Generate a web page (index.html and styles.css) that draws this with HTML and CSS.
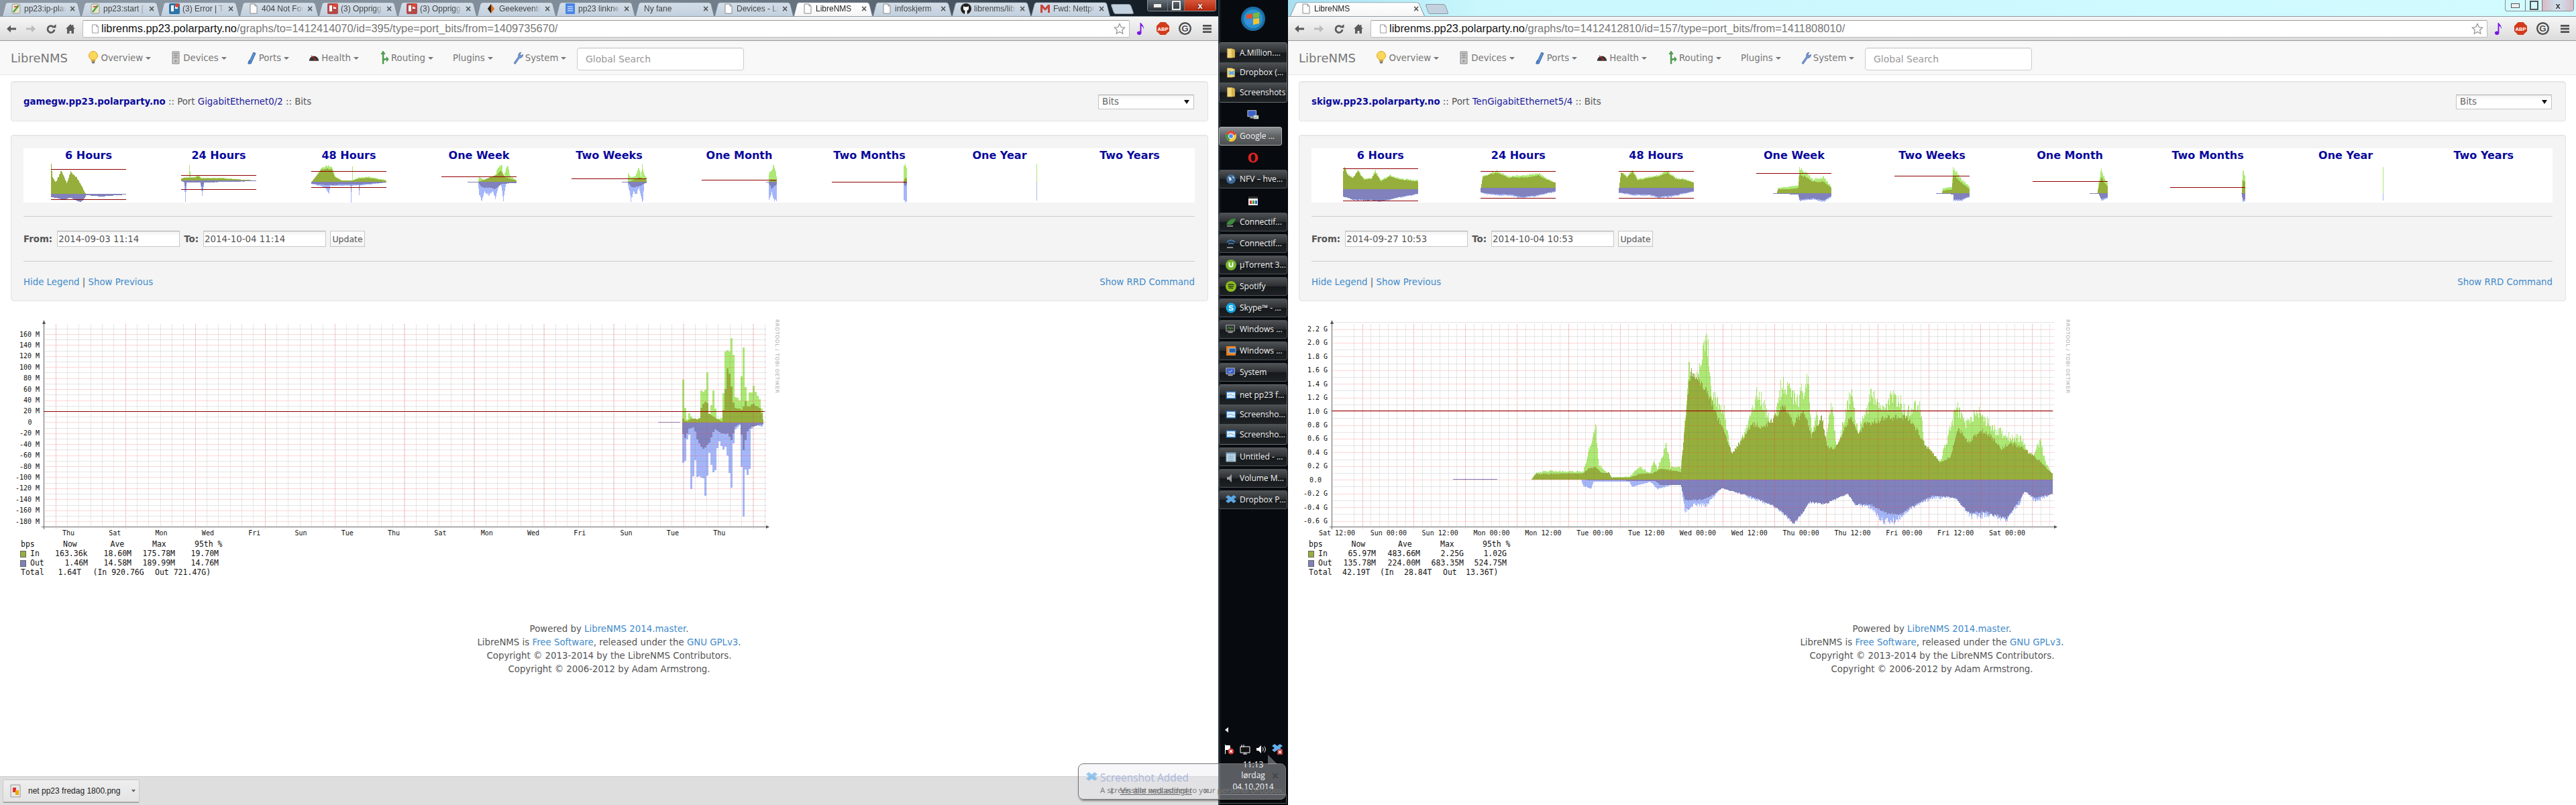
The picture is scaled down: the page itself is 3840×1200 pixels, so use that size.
FILE: index.html
```html
<!DOCTYPE html>
<html>
	<head>
		<meta charset="UTF-8">
		<title>LibreNMS</title>
		<link rel="stylesheet" href="styles.css">
	</head>
	<body>
		<svg class="defs">
			<symbol id="i-page" viewBox="0 0 16 16"><path d="M3 1h7l3 3v11H3z" fill="#fff" stroke="#8a8a8a"/><path d="M10 1v3h3" fill="none" stroke="#8a8a8a"/></symbol>
			<symbol id="i-back" viewBox="0 0 16 16"><path d="M15 6.5H7V2.5L1 8l6 5.500V9.500h8z" fill="#5a5a5a"/></symbol>
			<symbol id="i-fwd" viewBox="0 0 16 16"><path d="M1 6.500h8V2.500L15 8l-6 5.500V9.500H1z" fill="#bcbcbc"/></symbol>
			<symbol id="i-reload" viewBox="0 0 16 16"><path d="M13 9a5 5 0 1 1-1.700-4.200" fill="none" stroke="#5a5a5a" stroke-width="2.800"/><path d="M9 6.500h6.500V1z" fill="#5a5a5a"/></symbol>
			<symbol id="i-home" viewBox="0 0 16 16"><path d="M8 1L1 8h2v7h3.500v-4h3v4H13V8h2l-2.500-2.500V2h-2v1.500z" fill="#5a5a5a"/></symbol>
			<symbol id="i-star" viewBox="0 0 18 18"><path d="M9 1.500l2.300 5 5.400.6-4 3.700 1.100 5.400L9 13.500l-4.800 2.700 1.100-5.400-4-3.700 5.400-.6z" fill="#fff" stroke="#8f8f8f" stroke-width="1.200"/></symbol>
			<symbol id="i-note" viewBox="0 0 16 20"><path d="M7 1v13.500A3.500 3 0 1 0 9 17V6c2 .5 3.500 2.500 3 5 2-3-.5-6-4-10z" fill="#7a16e6"/></symbol>
			<symbol id="i-menu" viewBox="0 0 14 14"><path d="M0 1h14v3H0zM0 6h14v3H0zM0 11h14v3H0z" fill="#505050"/></symbol>
			<symbol id="i-bulb" viewBox="0 0 16 20"><circle cx="8" cy="7" r="6.500" fill="#fbd75b" stroke="#d9a520"/><path d="M5 13h6v3H5z" fill="#c9a24b"/><path d="M6 16h4v2.500H6z" fill="#777"/></symbol>
			<symbol id="i-server" viewBox="0 0 16 20"><path d="M3 1h10v18H3z" fill="#c8c8c8" stroke="#8a8a8a"/><path d="M5 4h6M5 7h6M5 10h6" stroke="#777"/><circle cx="8" cy="15" r="1.500" fill="#888"/></symbol>
			<symbol id="i-cable" viewBox="0 0 16 20"><path d="M3 19L11 2l3 1.500L7 19z" fill="#5c8fd6" stroke="#3968a8"/><path d="M2 19.500l2-6 3 1.500z" fill="#3a6db0"/></symbol>
			<symbol id="i-gauge" viewBox="0 0 20 20"><path d="M1 16a9 9 0 1 1 18 0z" fill="#333"/><path d="M5 6l9 9" stroke="#d22" stroke-width="1.500"/></symbol>
			<symbol id="i-route" viewBox="0 0 16 22"><path d="M6 21V5H3.500L7 0l3.500 5H8v8l5-1v-2.500l3 4-3 4V14l-5 1v6z" fill="#4da34a" stroke="#2f7a2e" stroke-width=".6"/></symbol>
			<symbol id="i-wrench" viewBox="0 0 16 20"><path d="M2 18l7-10c-1-3 1-6 4-6l-2 3 2 2 2.500-2c.5 3-2 6-5 5.500L4 19.500z" fill="#6e96cf" stroke="#47689c" stroke-width=".7"/></symbol>
			<symbol id="i-wiki" viewBox="0 0 16 16"><rect x="2" y="1" width="12" height="14" rx="2" fill="#e9e4c9" stroke="#999"/><path d="M4 13L12 3" stroke="#4aa13f" stroke-width="2.500"/><path d="M5 5h5" stroke="#c0392b" stroke-width="1.500"/></symbol>
			<symbol id="i-trello" viewBox="0 0 16 16"><rect width="16" height="16" rx="2" fill="#2c74a8"/><path d="M3 3h4v9H3zM9 3h4v5H9z" fill="#fff"/><circle cx="12" cy="3" r="3" fill="#e3462e"/></symbol>
			<symbol id="i-trello-red" viewBox="0 0 16 16"><rect width="16" height="16" rx="2" fill="#b34a4a"/><path d="M3 3h4v9H3zM9 3h4v5H9z" fill="#fff"/><circle cx="12" cy="3" r="3" fill="#e3462e"/></symbol>
			<symbol id="i-geek" viewBox="0 0 16 16"><path d="M8 1l5 7-5 7-5-7z" fill="#e0701a"/><path d="M8 1v14l-5-7z" fill="#222"/></symbol>
			<symbol id="i-doc" viewBox="0 0 16 16"><rect x="1" width="14" height="16" rx="1" fill="#4a86e8"/><path d="M4 5h8M4 8h8M4 11h8" stroke="#fff" stroke-width="1.200"/></symbol>
			<symbol id="i-github" viewBox="0 0 16 16"><circle cx="8" cy="8" r="8" fill="#222"/><path d="M4 4l2 1.200h4L12 4v4c0 2-1.500 3-4 3s-4-1-4-3zM6.500 11h3v5h-3z" fill="#fff"/></symbol>
			<symbol id="i-gmail" viewBox="0 0 16 16"><path d="M1 2h3l4 5 4-5h3v12h-3V7L8 11 4 7v7H1z" fill="#c9453a"/></symbol>
			<symbol id="i-folder" viewBox="0 0 16 20"><path d="M1 2h8l6 2v14l-6 1H1z" fill="#f2d77c" stroke="#b89a3c" stroke-width=".6"/><path d="M9 2v17l6-1V4z" fill="#d9b24c"/></symbol>
			<symbol id="i-box" viewBox="0 0 16 16"><path d="M4 1l4 3 4-3 4 3-4 3 4 3-4 3-4-3-4 3-4-3 4-3-4-3z" fill="#5aa8e8"/></symbol>
			<symbol id="i-dropfolder" viewBox="0 0 16 20"><path d="M1 2h8l6 2v14l-6 1H1z" fill="#f2d77c" stroke="#b89a3c" stroke-width=".6"/><path d="M6 7l3 2 3-2 3 2-3 2 3 2-3 2-3-2-3 2-3-2 3-2-3-2z" fill="#5aa8e8"/></symbol>
			<symbol id="i-monitor" viewBox="0 0 20 16"><rect x="1" y="1" width="14" height="10" fill="#3c60c8" stroke="#ccc"/><path d="M5 12h6v2H5z" fill="#bbb"/><rect x="11" y="9" width="8" height="6" fill="#ddd"/><path d="M12 12l2 1 3-2" stroke="#2a8a2a" fill="none"/></symbol>
			<symbol id="i-chrome" viewBox="0 0 16 16"><circle cx="8" cy="8" r="8" fill="#dd4b39"/><path d="M8 8L1 4.500A8 8 0 0 0 5 15.500z" fill="#3ba14a"/><path d="M8 8L5 15.500A8 8 0 0 0 16 8V5z" fill="#f7c936"/><circle cx="8" cy="8" r="3.600" fill="#4b8bf0" stroke="#fff"/></symbol>
			<symbol id="i-opera" viewBox="0 0 16 16"><ellipse cx="8" cy="8" rx="7.500" ry="7.500" fill="#e02020"/><ellipse cx="8" cy="8" rx="3.200" ry="5.500" fill="#111"/></symbol>
			<symbol id="i-globe" viewBox="0 0 16 16"><circle cx="8" cy="8" r="7" fill="#3f6c99"/><path d="M4 4l4 2 1 3-3 2zM10 3l3 3-2 1z" fill="#cfe2f3"/></symbol>
			<symbol id="i-clap" viewBox="0 0 16 16"><rect x="1" y="5" width="14" height="10" fill="#eee"/><path d="M1 2h14v3H1z" fill="#333"/><path d="M3 8h3v5H3z" fill="#d33"/><path d="M7 8h3v5H7z" fill="#3a3"/><path d="M11 8h3v5h-3z" fill="#36c"/></symbol>
			<symbol id="i-leaf" viewBox="0 0 16 16"><path d="M1 12c3-8 8-9 14-9-2 6-5 10-11 9z" fill="#3c8a3c"/><path d="M2 15h9v-2H2z" fill="#888"/></symbol>
			<symbol id="i-wifi" viewBox="0 0 16 16"><path d="M2 6c4-4 8-4 12 0M4 9c3-2 5-2 8 0" fill="none" stroke="#3f87c8" stroke-width="1.500"/><path d="M2 15h9v-2H2z" fill="#888"/></symbol>
			<symbol id="i-utorrent" viewBox="0 0 16 16"><circle cx="8" cy="8" r="8" fill="#77b52f"/><path d="M4.500 4v4a3.500 3.500 0 0 0 7 0V4H9.500v4a1.500 1.500 0 0 1-3 0V4z" fill="#fff"/></symbol>
			<symbol id="i-spotify" viewBox="0 0 16 16"><circle cx="8" cy="8" r="8" fill="#8bbb1f"/><path d="M3.500 5.500c3-1 6-1 9 .5M4 8c3-.8 5-.8 8 .5M4.500 10.500c2-.6 4-.6 6.500.4" fill="none" stroke="#222" stroke-width="1.300"/></symbol>
			<symbol id="i-perf" viewBox="0 0 18 16"><rect x="1" y="1" width="14" height="10" fill="#333" stroke="#bbb"/><path d="M3 7l3-3 2 4 2-3 3 2" stroke="#3c3" fill="none"/><path d="M4 12h8v2H4z" fill="#aaa"/></symbol>
			<symbol id="i-vbox" viewBox="0 0 16 16"><rect x="1" y="1" width="14" height="14" fill="#e0801f"/><rect x="5" y="4" width="10" height="7" fill="#1f5fb0" stroke="#fff" stroke-width=".6"/></symbol>
			<symbol id="i-system" viewBox="0 0 18 16"><rect x="1" y="1" width="14" height="10" fill="#3c60c8" stroke="#bbb"/><path d="M5 6l2 2 4-4" stroke="#fff" fill="none"/><path d="M4 12h8v2H4z" fill="#aaa"/></symbol>
			<symbol id="i-photo" viewBox="0 0 18 16"><rect x="1.500" y="2.500" width="15" height="11" fill="#dcecf7" stroke="#2a78c4" stroke-width="1.500"/><path d="M3 9l5-2 7 3" stroke="#6fa3d0" fill="none"/></symbol>
			<symbol id="i-notepad" viewBox="0 0 16 16"><rect x="1" y="2" width="14" height="13" fill="#bcd6ea" stroke="#8aa"/><path d="M1 2h14v2H1z" fill="#7fa7c9"/><path d="M4 7h8M4 10h8M4 13h8" stroke="#7b9ab5"/></symbol>
			<symbol id="i-volume" viewBox="0 0 16 16"><path d="M2 6h3l4-4v12l-4-4H2z" fill="#9a9a9a"/></symbol>
			<symbol id="i-flag" viewBox="0 0 16 16"><path d="M2 1v14h1V9h6l1 1V3L9 2H3V1z" fill="#fff"/><circle cx="11" cy="11" r="4.500" fill="#d0312d"/><path d="M9 9l4 4m0-4l-4 4" stroke="#fff" stroke-width="1.300"/></symbol>
			<symbol id="i-net" viewBox="0 0 16 16"><path d="M1 4h14v9H1z" fill="#111" stroke="#fff"/><path d="M5 15h6M8 13v2M3 1v4M6 1v4" stroke="#fff"/></symbol>
			<symbol id="i-speaker" viewBox="0 0 16 16"><path d="M1 6h3l4-4v12l-4-4H1z" fill="#fff"/><path d="M10 5c1.500 2 1.500 4 0 6M12.500 3.500c2.500 3 2.500 6 0 9" stroke="#fff" fill="none"/></symbol>
			<symbol id="i-dropx" viewBox="0 0 16 16"><path d="M4 0l4 3 4-3 4 3-4 3 4 3-4 3-4-3-4 3-4-3 4-3-4-3z" fill="#63b0ea"/><rect x="8" y="8" width="8" height="8" rx="1" fill="#c9302c"/><path d="M10 10l4 4m0-4l-4 4" stroke="#fff" stroke-width="1.300"/></symbol>
			<symbol id="i-png" viewBox="0 0 16 20"><path d="M1 1h14v18H1z" fill="#e8e8e8" stroke="#999"/><path d="M4 5h5v7H4z" fill="#d33"/><path d="M8 9h5v7H8z" fill="#ea0"/></symbol>
		</svg>

		<section class="window window-active">
			<div class="tabs">
				<a class="tab"><svg class="fav"><use href="#i-wiki"/></svg><span class="tab-title">pp23:ip-plan</span><span class="tab-x">×</span></a>
				<a class="tab"><svg class="fav"><use href="#i-wiki"/></svg><span class="tab-title">pp23:start [T</span><span class="tab-x">×</span></a>
				<a class="tab"><svg class="fav"><use href="#i-trello"/></svg><span class="tab-title">(3) Error | Tr</span><span class="tab-x">×</span></a>
				<a class="tab"><svg class="fav"><use href="#i-page"/></svg><span class="tab-title">404 Not Foun</span><span class="tab-x">×</span></a>
				<a class="tab"><svg class="fav"><use href="#i-trello-red"/></svg><span class="tab-title">(3) Opprigg</span><span class="tab-x">×</span></a>
				<a class="tab"><svg class="fav"><use href="#i-trello-red"/></svg><span class="tab-title">(3) Opprigg</span><span class="tab-x">×</span></a>
				<a class="tab"><svg class="fav"><use href="#i-geek"/></svg><span class="tab-title">Geekevents</span><span class="tab-x">×</span></a>
				<a class="tab"><svg class="fav"><use href="#i-doc"/></svg><span class="tab-title">pp23 linknet</span><span class="tab-x">×</span></a>
				<a class="tab tab-nofav"><span class="tab-title">Ny fane</span><span class="tab-x">×</span></a>
				<a class="tab"><svg class="fav"><use href="#i-page"/></svg><span class="tab-title">Devices - Lib</span><span class="tab-x">×</span></a>
				<a class="tab tab-on"><svg class="fav"><use href="#i-page"/></svg><span class="tab-title">LibreNMS</span><span class="tab-x">×</span></a>
				<a class="tab"><svg class="fav"><use href="#i-page"/></svg><span class="tab-title">infoskjerm</span><span class="tab-x">×</span></a>
				<a class="tab"><svg class="fav"><use href="#i-github"/></svg><span class="tab-title">librenms/lib</span><span class="tab-x">×</span></a>
				<a class="tab"><svg class="fav"><use href="#i-gmail"/></svg><span class="tab-title">Fwd: Nettpr</span><span class="tab-x">×</span></a>
				<span class="tab-new"></span>
				<div class="winbtns"><span class="wb wb-min"></span><span class="wb wb-max"></span><span class="wb wb-close">x</span></div>
			</div>
			<div class="toolbar">
				<span class="tool"><svg><use href="#i-back"/></svg></span>
				<span class="tool"><svg><use href="#i-fwd"/></svg></span>
				<span class="tool"><svg><use href="#i-reload"/></svg></span>
				<span class="tool"><svg><use href="#i-home"/></svg></span>
				<div class="omnibox"><svg class="omni-page"><use href="#i-page"/></svg><span class="url"><b>librenms.pp23.polarparty.no</b>/graphs/to=1412414070/id=395/type=port_bits/from=1409735670/</span><svg class="omni-star"><use href="#i-star"/></svg></div>
				<span class="ext"><svg class="ext-note"><use href="#i-note"/></svg></span>
				<span class="ext"><svg viewBox="0 0 20 20"><path d="M6 0h8l6 6v8l-6 6H6l-6-6V6z" fill="#d13b1c"/><text x="10" y="13.500" text-anchor="middle" class="abp-text">ABP</text></svg></span>
				<span class="ext"><svg viewBox="0 0 20 20"><circle cx="10" cy="10" r="10" fill="#4d4d4d"/><circle cx="10" cy="10" r="7.500" fill="#f2f2f2"/><text x="10" y="15" text-anchor="middle" class="g-text">G</text></svg></span>
				<span class="ext"><svg class="ext-menu"><use href="#i-menu"/></svg></span>
			</div>
			<nav class="navbar">
				<a class="brand">LibreNMS</a>
				<a class="nav-item"><svg><use href="#i-bulb"/></svg>Overview<i class="caret"></i></a>
				<a class="nav-item"><svg><use href="#i-server"/></svg>Devices<i class="caret"></i></a>
				<a class="nav-item"><svg><use href="#i-cable"/></svg>Ports<i class="caret"></i></a>
				<a class="nav-item"><svg><use href="#i-gauge"/></svg>Health<i class="caret"></i></a>
				<a class="nav-item"><svg><use href="#i-route"/></svg>Routing<i class="caret"></i></a>
				<a class="nav-item">Plugins<i class="caret"></i></a>
				<a class="nav-item"><svg><use href="#i-wrench"/></svg>System<i class="caret"></i></a>
				<input class="search" placeholder="Global Search">
			</nav>
			<div class="well well-title">
				<div class="crumb"><a class="host">gamegw.pp23.polarparty.no</a> :: Port <a class="port">GigabitEthernet0/2</a> :: Bits</div>
				<div class="select">Bits<i></i></div>
			</div>
			<div class="well well-graphs">
				<div class="thumbs" data-set="left">
					<a class="thumb">6 Hours<svg></svg></a>
					<a class="thumb">24 Hours<svg></svg></a>
					<a class="thumb">48 Hours<svg></svg></a>
					<a class="thumb">One Week<svg></svg></a>
					<a class="thumb">Two Weeks<svg></svg></a>
					<a class="thumb">One Month<svg></svg></a>
					<a class="thumb">Two Months<svg></svg></a>
					<a class="thumb">One Year<svg></svg></a>
					<a class="thumb">Two Years<svg></svg></a>
				</div>
				<hr>
				<form class="range"><b>From:</b><input class="date" value="2014-09-03 11:14"><b>To:</b><input class="date" value="2014-10-04 11:14"><button type="button">Update</button></form>
				<hr>
				<div class="links"><span><a>Hide Legend</a> | <a>Show Previous</a></span><a>Show RRD Command</a></div>
			</div>
			<svg class="rrd" id="rrd-left" viewBox="0 460 1200 410"></svg>
			<footer class="foot">
				<p>Powered by <a>LibreNMS 2014.master</a>.</p>
				<p>LibreNMS is <a>Free Software</a>, released under the <a>GNU GPLv3</a>.</p>
				<p>Copyright © 2013-2014 by the LibreNMS Contributors.</p>
				<p>Copyright © 2006-2012 by Adam Armstrong.</p>
			</footer>
			<div class="downloads">
				<div class="dl-item"><svg><use href="#i-png"/></svg><span>net pp23 fredag 1800.png</span><i></i></div>
				<span class="dl-arrow">⬇</span>
				<a class="dl-all">Vis alle nedlastinger</a>
				<span class="dl-x">×</span>
			</div>
		</section>

		<aside class="taskbar">
			<div class="orb"><svg viewBox="0 0 36 36"><circle cx="18" cy="18" r="18" fill="#1c6fa8"/><circle cx="18" cy="18" r="14" fill="#2a93cf"/><path d="M8 12l9-2v7l-9 1z" fill="#e8502a"/><path d="M18 10l9-2v8l-9 1z" fill="#7ab93c"/><path d="M8 19l9-1v7l-9 2z" fill="#3b8fe0"/><path d="M18 18l9-1v8l-9 2z" fill="#f4c22e"/></svg></div>
			<div class="task-group">
				<a class="task"><svg><use href="#i-folder"/></svg>A.Million....</a>
				<a class="task"><svg><use href="#i-dropfolder"/></svg>Dropbox (...</a>
				<a class="task"><svg><use href="#i-folder"/></svg>Screenshots</a>
			</div>
			<div class="task-slot"><svg><use href="#i-monitor"/></svg></div>
			<a class="task task-on"><svg><use href="#i-chrome"/></svg>Google ...</a>
			<div class="task-slot"><svg><use href="#i-opera"/></svg></div>
			<a class="task"><svg><use href="#i-globe"/></svg>NFV – hve...</a>
			<div class="task-slot"><svg><use href="#i-clap"/></svg></div>
			<a class="task"><svg><use href="#i-leaf"/></svg>Connectif...</a>
			<a class="task"><svg><use href="#i-wifi"/></svg>Connectif...</a>
			<a class="task"><svg><use href="#i-utorrent"/></svg>µTorrent 3...</a>
			<a class="task"><svg><use href="#i-spotify"/></svg>Spotify</a>
			<a class="task"><svg viewBox="0 0 16 16"><circle cx="8" cy="8" r="7.500" fill="#12a5e8"/><text x="8" y="12" text-anchor="middle" class="skype-text">S</text></svg>Skype™ - ...</a>
			<a class="task"><svg><use href="#i-perf"/></svg>Windows ...</a>
			<a class="task"><svg><use href="#i-vbox"/></svg>Windows ...</a>
			<a class="task"><svg><use href="#i-system"/></svg>System</a>
			<div class="task-group">
				<a class="task"><svg><use href="#i-photo"/></svg>net pp23 f...</a>
				<a class="task"><svg><use href="#i-photo"/></svg>Screensho...</a>
				<a class="task"><svg><use href="#i-photo"/></svg>Screensho...</a>
			</div>
			<a class="task"><svg><use href="#i-notepad"/></svg>Untitled - ...</a>
			<a class="task"><svg><use href="#i-volume"/></svg>Volume M...</a>
			<a class="task"><svg><use href="#i-box"/></svg>Dropbox P...</a>
			<div class="tray">
				<i class="tray-arrow"></i>
				<div class="tray-icons"><svg><use href="#i-flag"/></svg><svg><use href="#i-net"/></svg><svg><use href="#i-speaker"/></svg><svg><use href="#i-dropx"/></svg></div>
				<div class="clock"><span>11:13</span><span>lørdag</span><span>04.10.2014</span></div>
				<div class="show-desktop"></div>
			</div>
		</aside>

		<section class="window">
			<div class="tabs tabs-idle">
				<a class="tab tab-on tab-wide"><svg class="fav"><use href="#i-page"/></svg><span class="tab-title">LibreNMS</span><span class="tab-x">×</span></a>
				<span class="tab-new"></span>
				<div class="winbtns"><span class="wb wb-min"></span><span class="wb wb-max"></span><span class="wb wb-close">x</span></div>
			</div>
			<div class="toolbar">
				<span class="tool"><svg><use href="#i-back"/></svg></span>
				<span class="tool"><svg><use href="#i-fwd"/></svg></span>
				<span class="tool"><svg><use href="#i-reload"/></svg></span>
				<span class="tool"><svg><use href="#i-home"/></svg></span>
				<div class="omnibox"><svg class="omni-page"><use href="#i-page"/></svg><span class="url"><b>librenms.pp23.polarparty.no</b>/graphs/to=1412412810/id=157/type=port_bits/from=1411808010/</span><svg class="omni-star"><use href="#i-star"/></svg></div>
				<span class="ext"><svg class="ext-note"><use href="#i-note"/></svg></span>
				<span class="ext"><svg viewBox="0 0 20 20"><path d="M6 0h8l6 6v8l-6 6H6l-6-6V6z" fill="#d13b1c"/><text x="10" y="13.500" text-anchor="middle" class="abp-text">ABP</text></svg></span>
				<span class="ext"><svg viewBox="0 0 20 20"><circle cx="10" cy="10" r="10" fill="#4d4d4d"/><circle cx="10" cy="10" r="7.500" fill="#f2f2f2"/><text x="10" y="15" text-anchor="middle" class="g-text">G</text></svg></span>
				<span class="ext"><svg class="ext-menu"><use href="#i-menu"/></svg></span>
			</div>
			<nav class="navbar">
				<a class="brand">LibreNMS</a>
				<a class="nav-item"><svg><use href="#i-bulb"/></svg>Overview<i class="caret"></i></a>
				<a class="nav-item"><svg><use href="#i-server"/></svg>Devices<i class="caret"></i></a>
				<a class="nav-item"><svg><use href="#i-cable"/></svg>Ports<i class="caret"></i></a>
				<a class="nav-item"><svg><use href="#i-gauge"/></svg>Health<i class="caret"></i></a>
				<a class="nav-item"><svg><use href="#i-route"/></svg>Routing<i class="caret"></i></a>
				<a class="nav-item">Plugins<i class="caret"></i></a>
				<a class="nav-item"><svg><use href="#i-wrench"/></svg>System<i class="caret"></i></a>
				<input class="search" placeholder="Global Search">
			</nav>
			<div class="well well-title">
				<div class="crumb"><a class="host">skigw.pp23.polarparty.no</a> :: Port <a class="port">TenGigabitEthernet5/4</a> :: Bits</div>
				<div class="select">Bits<i></i></div>
			</div>
			<div class="well well-graphs">
				<div class="thumbs" data-set="right">
					<a class="thumb">6 Hours<svg></svg></a>
					<a class="thumb">24 Hours<svg></svg></a>
					<a class="thumb">48 Hours<svg></svg></a>
					<a class="thumb">One Week<svg></svg></a>
					<a class="thumb">Two Weeks<svg></svg></a>
					<a class="thumb">One Month<svg></svg></a>
					<a class="thumb">Two Months<svg></svg></a>
					<a class="thumb">One Year<svg></svg></a>
					<a class="thumb">Two Years<svg></svg></a>
				</div>
				<hr>
				<form class="range"><b>From:</b><input class="date" value="2014-09-27 10:53"><b>To:</b><input class="date" value="2014-10-04 10:53"><button type="button">Update</button></form>
				<hr>
				<div class="links"><span><a>Hide Legend</a> | <a>Show Previous</a></span><a>Show RRD Command</a></div>
			</div>
			<svg class="rrd" id="rrd-right" viewBox="0 460 1200 410"></svg>
			<footer class="foot">
				<p>Powered by <a>LibreNMS 2014.master</a>.</p>
				<p>LibreNMS is <a>Free Software</a>, released under the <a>GNU GPLv3</a>.</p>
				<p>Copyright © 2013-2014 by the LibreNMS Contributors.</p>
				<p>Copyright © 2006-2012 by Adam Armstrong.</p>
			</footer>
		</section>

		<div class="toast">
			<svg class="toast-icon"><use href="#i-box"/></svg>
			<div class="toast-title">Screenshot Added</div>
			<div class="toast-text">A screenshot was added to your personal Dropbox.</div>
			<span class="toast-x">×</span>
		</div>
		<script src="graphs.js"></script>
	</body>
</html>
```
FILE: styles.css
```css
*{margin: 0;padding: 0;box-sizing: border-box;}
html,body{width: 3840px;height: 1200px;overflow: hidden;}
body{display: flex;position: relative;background: #fff;font: 13.33px "DejaVu Sans",Verdana,sans-serif;color: #555;}
a{color: #428bca;text-decoration: none;}
.defs{position: absolute;width: 0;height: 0;}
.abp-text{font: bold 8px "Liberation Sans",sans-serif;fill: #fff;}
.g-text{font: bold 14px "Liberation Sans",sans-serif;fill: #4d4d4d;}
.skype-text{font: bold 11px "Liberation Sans",sans-serif;fill: #fff;}

/* browser windows */
.window{flex: 1;min-width: 0;height: 1200px;display: flex;flex-direction: column;}
.window-active{flex: 0 0 1816px;}
.tabs{height: 24px;flex: none;display: flex;padding-left: 3px;isolation: isolate;background: linear-gradient(90deg,#8d99a4 0,#7f8b97 50%,#56626e 75%,#1a2530 90%,#0b1118 100%);font: 12px "Liberation Sans",Arial,sans-serif;color: #333;}
.tabs-idle{background: linear-gradient(90deg,#a9dff0 0,#c9f7fd 15%,#d2fbff 100%);}
.tab{position: relative;width: 118px;height: 24px;display: flex;align-items: center;padding: 2px 7px 0 13px;color: #444;}
.tab::before{content: "";position: absolute;z-index: -1;left: 0;right: 0;top: 1px;bottom: 0;background: linear-gradient(#d4deE8,#c2d0de);border: 1px solid #7e8c9a;border-bottom: 0;border-radius: 4px 4px 0 0;transform: perspective(40px) rotateX(10deg);transform-origin: bottom;}
.tab-on{z-index: 2;color: #222;}
.tab-on::before{background: linear-gradient(#fff,#f6f6f6);}
.tab-wide{width: 201px;padding-left: 16px;}
.tab-nofav{padding-left: 13px;}
.fav{width: 16px;height: 16px;flex: none;margin-right: 4px;}
.tab-title{flex: 1;min-width: 0;overflow: hidden;white-space: nowrap;-webkit-mask-image: linear-gradient(90deg,#000 82%,transparent);}
.tab-x{flex: none;width: 12px;margin-left: 4px;font: bold 14px "Liberation Sans",sans-serif;color: #555;text-align: center;}
.tab-new{width: 30px;height: 15px;margin: 6px 0 0 3px;background: #c4d2df;border: 1px solid #8c9aa8;border-radius: 3px;transform: skewX(20deg);}
.winbtns{margin-left: auto;margin-right: 3px;width: 103px;height: 17px;display: flex;border: 1px solid #8a8f94;border-top: 0;border-radius: 0 0 4px 4px;overflow: hidden;font: bold 13px "Liberation Sans",sans-serif;color: #fff;text-shadow: 0 0 2px #000;}
.wb{display: flex;align-items: center;justify-content: center;background: linear-gradient(#66707a,#2b3239);border-right: 1px solid #777;}
.wb-min{width: 30px;}
.wb-min::after{content: "";width: 11px;height: 5px;background: #eee;border: 1px solid #555;}
.wb-max{width: 25px;}
.wb-max::after{content: "";width: 9px;height: 10px;border: 2px solid #eee;outline: 1px solid #555;}
.wb-close{flex: 1;border: 0;background: linear-gradient(#d8573a,#b4260c);}
.tabs-idle .wb{background: transparent;color: #333;text-shadow: 0 0 3px #fff;}
.tabs-idle .wb-max::after{border-color: #555;outline: 0;}
.tabs-idle .wb-close{background: linear-gradient(90deg,#d9b9c4,#cfdbe8 40%,#cfdbe8 60%,#d9b9c4);}
.toolbar{height: 37px;flex: none;display: flex;align-items: center;padding: 0 0 0 2px;background: linear-gradient(#f6f6f6,#dcdcdc);border-top: 1px solid #8f9aa3;border-bottom: 1px solid #9a9a9a;}
.tool{width: 29.5px;height: 16px;display: flex;justify-content: center;}
.tool svg{width: 16px;height: 16px;}
.omnibox{flex: 1;min-width: 0;height: 26px;margin-left: 3px;display: flex;align-items: center;padding: 0 5px 0 11px;background: #fff;border: 1px solid #bdbdbd;border-top-color: #9d9d9d;border-radius: 2px;}
.omni-page{width: 14px;height: 16px;flex: none;}
.url{flex: 1;margin-left: 2px;font: 16.4px "Liberation Sans",Arial,sans-serif;color: #777;white-space: nowrap;}
.url b{font-weight: normal;color: #111;}
.omni-star{width: 18px;height: 18px;flex: none;}
.ext{width: 33px;display: flex;justify-content: center;}
.ext svg{width: 19px;height: 19px;}
.ext .ext-note{width: 15px;height: 19px;}
.ext .ext-menu{width: 13px;height: 13px;}
.navbar{height: 51px;flex: none;display: flex;align-items: center;padding-left: 16px;background: #f8f8f8;border-bottom: 1px solid #e7e7e7;color: #777;}
.brand{font-size: 18px;color: #777;margin-right: 16px;}
.nav-item{display: flex;align-items: center;padding: 0 14.5px;color: #777;font-size: 13.33px;}
.nav-item svg{width: 16px;height: 20px;margin-right: 3px;}
.caret{width: 0;height: 0;margin: 1px 0 0 4px;border: 4px solid transparent;border-top-color: #777;border-bottom: 0;}
.search{width: 249px;height: 34px;margin: 4px 0 0 1px;padding: 0 12px;background: #fff;border: 1px solid #ccc;border-radius: 4px;font: 14px "DejaVu Sans",Verdana,sans-serif;box-shadow: inset 0 1px 1px rgba(0,0,0,.075);}
.search::placeholder{color: #999;}

/* wells */
.well{flex: none;margin: 0 15px 0 16px;background: #f4f4f4;border: 1px solid #e3e3e3;border-radius: 4px;padding: 0 19px 0 18px;box-shadow: inset 0 1px 1px rgba(0,0,0,.05);}
.well-title{height: 60px;margin-top: 9px;display: flex;align-items: center;justify-content: space-between;}
.crumb{color: #555;margin-top: 0;}
.host{font-weight: bold;color: #0a0a9c;}
.port{color: #1a1a9c;}
.select{position: relative;width: 143px;height: 22px;margin: 1px 1px 0 0;padding-left: 5px;line-height: 20px;background: linear-gradient(#f2f2f2,#fff 35%);border: 1px solid #c4c4c4;border-top-color: #aaa;color: #666;}
.select i{position: absolute;right: 6px;top: 7px;border: 4px solid transparent;border-top: 6px solid #111;border-bottom: 0;}
.well-graphs{height: 248px;margin-top: 20px;padding-top: 19px;}
.thumbs{display: grid;grid-template-columns: repeat(9,1fr);height: 81px;background: #fff;}
.thumb{display: flex;flex-direction: column;align-items: center;padding-top: 1px;font-size: 16px;line-height: 20px;font-weight: bold;color: #0a0a9c;}
.thumb svg{width: 112px;height: 60px;flex: none;overflow: hidden;}
hr{height: 0;border: 0;border-top: 1px solid #ccc;margin-top: 20px;}
.range{height: 24px;margin-top: 21px;display: flex;align-items: center;color: #555;}
.date{width: 183px;height: 24px;margin: 0 6px 0 7px;padding-left: 1px;background: linear-gradient(#f0f0f0,#fff 30%);border: 1px solid #c8c8c8;border-top-color: #aaa;font: 13.33px "DejaVu Sans",Verdana,sans-serif;color: #555;}
button{width: 52px;height: 24px;background: linear-gradient(#fff,#f4f4f4);border: 1px solid #c4c4c4;font: 12.5px "DejaVu Sans",Verdana,sans-serif;color: #555;}
.range + hr{margin-top: 21px;}
.links{display: flex;justify-content: space-between;margin-top: 21px;line-height: 20px;color: #555;}

/* rrd graphs */
.rrd{width: 1200px;height: 410px;flex: none;margin-top: 11px;}
.rrd text{font: 10px "DejaVu Sans Mono",monospace;fill: #111;}
.rrd .legend{font-size: 11.5px;}
.rrd .mark{font: 7.5px "DejaVu Sans",sans-serif;fill: #aaa;}
.foot{flex: none;margin-top: 58px;text-align: center;line-height: 20px;color: #555;}
.downloads{margin-top: auto;flex: none;height: 43px;display: flex;align-items: center;padding: 0 0 0 4px;background: #dedede;border-top: 1px solid #cfcfcf;font: 12px "Liberation Sans",Arial,sans-serif;color: #222;}
.dl-item{width: 204px;height: 35px;display: flex;align-items: center;padding-left: 10px;background: linear-gradient(#eee,#e4e4e4);border: 1px solid #c8c8c8;border-bottom: 2px solid #a8a8a8;border-radius: 2px;}
.dl-item svg{width: 16px;height: 20px;margin-right: 11px;}
.dl-item i{margin: 0 5px 0 auto;border: 3px solid transparent;border-top: 4px solid #666;border-bottom: 0;}
.dl-arrow{margin-left: auto;font-size: 13px;color: #777;}
.dl-all{margin: 0 17px 0 7px;color: #222;text-decoration: underline;}
.dl-x{margin-right: 14px;font: bold 14px "Liberation Sans",sans-serif;color: #666;}

/* windows 7 taskbar */
.taskbar{flex: 0 0 104px;height: 1200px;display: flex;flex-direction: column;gap: 4px;padding: 0 1px 0 1px;background: #070b0f;box-shadow: inset 5px 0 3px -3px #34434f;font: 12px "Open Sans","Liberation Sans",sans-serif;color: #f2f2f2;}
.orb{height: 59px;flex: none;padding-top: 10px;display: flex;justify-content: center;}
.orb svg{width: 36px;height: 36px;}
.task-group{flex: none;border: 1px solid #6a6e72;border-radius: 3px;overflow: hidden;}
.task{height: 28px;flex: none;display: flex;align-items: center;padding-left: 9px;white-space: nowrap;overflow: hidden;background: linear-gradient(#505356,#2c2f32 48%,#16191c 52%,#1f2225);border: 1px solid #4e5256;border-radius: 3px;}
.task svg{width: 16px;height: 16px;flex: none;margin-right: 5px;}
a.task{color: #f2f2f2;}
.task-group .task{height: 29.300px;border: 0;border-radius: 0;}
.task-on{margin-right: 8px;background: linear-gradient(#8e9193,#5f6264 50%,#4c4f51);border-color: #b0b0b0;}
.task-slot{height: 28px;flex: none;display: flex;align-items: center;justify-content: center;}
.task-slot svg{width: 18px;height: 16px;}
.tray{margin-top: auto;flex: none;display: flex;flex-direction: column;color: #fff;}
.tray-arrow{width: 0;height: 0;margin: 0 0 17px 9px;border: 4px solid transparent;border-right: 5px solid #eee;border-left: 0;}
.tray-icons{display: flex;gap: 8px;padding-left: 7px;}
.tray-icons svg{width: 16px;height: 16px;}
.clock{display: flex;flex-direction: column;align-items: center;margin-top: 7px;line-height: 16.500px;}
.show-desktop{height: 14px;margin: 3px 1px 2px 0;border: 1px solid #555;}

/* dropbox balloon */
.toast{position: absolute;left: 1607px;top: 1138px;width: 310px;height: 54px;padding: 10px 0 0 32px;background: rgba(232,232,238,.36);border: 1px solid #777;border-radius: 8px;box-shadow: 1px 2px 3px rgba(0,0,0,.4);font-family: "Open Sans","Liberation Sans",sans-serif;color: #777;}
.toast::before{content: "";position: absolute;right: 12px;top: -14px;border: 0 solid transparent;border-width: 14px 0 0 14px;border-bottom: 0;border-left-color: rgba(232,232,238,.36);}
.toast-icon{position: absolute;left: 11px;top: 11px;width: 17px;height: 17px;opacity: .6;}
.toast-title{font-size: 15.500px;line-height: 20px;color: #a9b6dc;}
.toast-text{font-size: 11.500px;line-height: 17px;color: #777;}
.toast-x{position: absolute;right: 10px;top: 8px;font: bold 17px "Liberation Sans",sans-serif;color: #444;}
```
FILE: graphs.js
```js
var NS = "http://www.w3.org/2000/svg";
var C = {inMax: "#ace974", inAvg: "#96ae3c", outMax: "#a4b6f8", outAvg: "#8181bd", red: "#900000"};

function add(parent, name, attrs, text) {
	var node = document.createElementNS(NS, name);
	for (var k in attrs) node.setAttribute(k, attrs[k]);
	if (text !== undefined) node.textContent = text;
	parent.appendChild(node);
	return node;
}
function noise(i) {
	var n = Math.sin(i * 12.9898) * 43758.5453;
	return n - Math.floor(n);
}
function at(pts, x) {
	for (var i = 1; i < pts.length; i++) {
		if (x <= pts[i][0]) {
			var a = pts[i - 1], b = pts[i];
			return a[1] + (b[1] - a[1]) * (x - a[0]) / (b[0] - a[0] || 1);
		}
	}
	return pts[pts.length - 1][1];
}
// stepped area from measured envelope points, roughened inward so peaks stay put
function area(parent, pts, zero, fill, step, jitter, seed) {
	var x0 = Math.round(pts[0][0]), x1 = Math.round(pts[pts.length - 1][0]);
	var d = "M" + x0 + " " + zero;
	for (var x = x0; x < x1; x += step) {
		var y = at(pts, x);
		y = zero + (y - zero) * (1 - jitter * noise(seed + x) * 1.3);
		d += "V" + y.toFixed(1) + "H" + Math.min(x + step, x1);
	}
	d += "V" + zero + "Z";
	add(parent, "path", {d: d, fill: fill, "shape-rendering": "crispEdges"});
}
function lines(parent, list, horizontal, from, to, stroke) {
	var d = "";
	list.forEach(function (v) {
		var p = Math.round(v) + .5;
		d += horizontal ? "M" + from + " " + p + "H" + to : "M" + p + " " + from + "V" + to;
	});
	add(parent, "path", {d: d, fill: "none", stroke: stroke, "stroke-dasharray": "1 1", "shape-rendering": "crispEdges"});
}
function range(start, step, end) {
	var out = [];
	for (var v = start; v <= end; v += step) out.push(v);
	return out;
}

function rrd(id, g) {
	var svg = document.getElementById(id);
	function conv(pts) {
		return pts.map(function (p) { return [g.ox + p[0] / 1.3067, 460 + p[1] / 3]; });
	}
	var zero = g.zero;
	area(svg, conv(g.inMax), zero, C.inMax, g.step, g.jitter, 1);
	area(svg, conv(g.inAvg), zero, C.inAvg, g.step, g.jitter * .5, 40);
	area(svg, conv(g.outMax), zero, C.outMax, g.step, g.jitter * .8, 90);
	area(svg, conv(g.outAvg), zero, C.outAvg, g.step, g.jitter * .4, 130);
	var flat = conv(g.flat);
	add(svg, "path", {d: "M" + Math.round(flat[0][0]) + " " + (zero - .5) + "H" + Math.round(flat[1][0]), stroke: C.outAvg, fill: "none"});

	var major = range(g.y0, g.yStep, 780), minor = range(g.y0 - g.yStep / 2, g.yStep, 780);
	lines(svg, minor, true, 65, 1143, "rgba(110,110,110,.36)");
	lines(svg, range(g.x0 - g.xMinor, g.xMinor, 1143), false, 483, 785, "rgba(110,110,110,.32)");
	lines(svg, major, true, 65, 1143, "rgba(255,60,60,.42)");
	lines(svg, range(g.x0, g.xMajor, 1143), false, 483, 788, "rgba(255,60,60,.42)");

	add(svg, "path", {d: "M65.5 482V789M62 785.500H1143", stroke: "#666", fill: "none", "shape-rendering": "crispEdges"});
	add(svg, "path", {d: "M65.500 477l-2.500 6h5zM1147 785.500l-5-2.500v5z", fill: "#555"});
	add(svg, "path", {d: "M65 " + (g.redY + .5) + "H1140", stroke: C.red, fill: "none", "shape-rendering": "crispEdges"});

	g.yLabels.forEach(function (t, i) {
		var text = t, end = 59;
		if (t === "0" || t === "0.0") end = t === "0" ? 47.500 : 50;
		add(svg, "text", {x: end, y: g.y0 + g.yStep * i + 3.500, "text-anchor": "end"}, text);
	});
	g.xLabels.forEach(function (t, i) {
		add(svg, "text", {x: g.xl0 + g.xlStep * i, y: 797.500, "text-anchor": "middle"}, t);
	});
	add(svg, "text", {class: "mark", transform: "translate(" + g.markX + " 476) rotate(90)", textLength: 110}, "RRDTOOL / TOBI OETIKER");

	// legend, every cell at its own measured x
	[[815, g.legend[0]], [829, g.legend[1]], [843, g.legend[2]], [857, g.legend[3]]].forEach(function (row) {
		row[1].forEach(function (cell) {
			add(svg, "text", {class: "legend", x: cell[0], y: row[0], "text-anchor": cell[2] ? "end" : "start"}, cell[1]);
		});
	});
	add(svg, "rect", {x: 30.500, y: 821.500, width: 8, height: 9, fill: C.inAvg, stroke: "#666"});
	add(svg, "rect", {x: 30.500, y: 835.500, width: 8, height: 9, fill: C.outAvg, stroke: "#666"});
}

rrd("rrd-left", {
	ox: 0, zero: 630, step: 3, jitter: .1, redY: 613,
	y0: 498, yStep: 16.42, x0: 82.600, xMajor: 104, xMinor: 17.330, markX: 1156,
	yLabels: ["160 M", "140 M", "120 M", "100 M", "80 M", "60 M", "40 M", "20 M", "0", "-20 M", "-40 M", "-60 M", "-80 M", "-100 M", "-120 M", "-140 M", "-160 M", "-180 M"],
	xLabels: ["Thu", "Sat", "Mon", "Wed", "Fri", "Sun", "Tue", "Thu", "Sat", "Mon", "Wed", "Fri", "Sun", "Tue", "Thu"],
	xl0: 102, xlStep: 69.300,
	flat: [[1282, 509], [1325, 509]],
	inMax: [[1325,509],[1328,270],[1331,400],[1336,500],[1342,455],[1346,495],[1360,495],[1364,365],[1372,360],[1376,280],[1380,480],[1388,360],[1394,490],[1405,490],[1411,165],[1420,170],[1425,75],[1430,390],[1440,400],[1447,125],[1452,420],[1460,360],[1468,340],[1478,400],[1485,480],[1487,509]],
	inAvg: [[1325,509],[1328,490],[1335,505],[1345,490],[1360,495],[1365,430],[1375,410],[1380,470],[1392,490],[1405,505],[1410,390],[1414,265],[1420,280],[1428,440],[1445,450],[1450,410],[1455,440],[1465,425],[1478,440],[1485,490],[1487,509]],
	outMax: [[1325,509],[1327,640],[1331,780],[1335,600],[1342,560],[1346,960],[1350,630],[1357,770],[1365,760],[1370,790],[1374,910],[1378,630],[1385,720],[1392,750],[1397,580],[1405,640],[1412,630],[1416,680],[1423,810],[1428,550],[1440,520],[1446,970],[1452,640],[1456,840],[1462,540],[1470,520],[1484,530],[1487,509]],
	outAvg: [[1325,509],[1328,550],[1331,590],[1340,540],[1350,530],[1358,600],[1368,630],[1378,610],[1390,540],[1405,560],[1415,560],[1423,590],[1430,530],[1440,515],[1447,650],[1452,560],[1460,530],[1487,515]],
	legend: [
		[[31,"bps"],[94,"Now"],[164.500,"Ave"],[227,"Max"],[290,"95th %"]],
		[[45,"In"],[130.500,"163.36k",1],[196,"18.60M",1],[261,"175.78M",1],[326,"19.70M",1]],
		[[45,"Out"],[131,"1.46M",1],[196,"14.58M",1],[261,"189.99M",1],[326,"14.76M",1]],
		[[31,"Total"],[86.500,"1.64T"],[138.500,"(In 920.76G"],[231,"Out 721.47G)"]]
	]
});

rrd("rrd-right", {
	ox: 80, zero: 715, step: 1, jitter: .16, redY: 612,
	y0: 490.500, yStep: 20.430, x0: 110.600, xMajor: 76.800, xMinor: 12.800, markX: 1160,
	yLabels: ["2.2 G", "2.0 G", "1.8 G", "1.6 G", "1.4 G", "1.2 G", "1.0 G", "0.8 G", "0.6 G", "0.4 G", "0.2 G", "0.0", "-0.2 G", "-0.4 G", "-0.6 G"],
	xLabels: ["Sat 12:00", "Sun 00:00", "Sun 12:00", "Mon 00:00", "Mon 12:00", "Tue 00:00", "Tue 12:00", "Wed 00:00", "Wed 12:00", "Thu 00:00", "Thu 12:00", "Fri 00:00", "Fri 12:00", "Sat 00:00"],
	xl0: 73, xlStep: 76.850,
	flat: [[217, 766], [303, 766]],
	inMax: [[368,766],[378,730],[400,722],[470,725],[480,625],[495,500],[500,690],[520,735],[525,752],[560,750],[580,700],[600,735],[607,670],[615,710],[632,585],[640,700],[660,705],[668,480],[675,185],[685,310],[700,190],[712,75],[722,350],[745,430],[760,650],[775,580],[790,500],[808,325],[820,375],[838,520],[855,305],[870,295],[885,380],[908,275],[915,540],[925,450],[940,640],[953,360],[965,640],[975,500],[992,330],[1005,530],[1017,450],[1033,335],[1050,430],[1077,340],[1100,430],[1125,380],[1135,590],[1165,680],[1197,405],[1215,490],[1243,420],[1262,500],[1298,550],[1325,560],[1340,660],[1360,575],[1372,690],[1385,740]],
	inAvg: [[368,766],[378,738],[400,738],[470,735],[480,710],[495,705],[505,732],[520,732],[525,755],[560,755],[580,738],[605,736],[620,712],[640,720],[660,730],[668,500],[675,330],[680,260],[700,300],[715,370],[730,460],[745,540],[760,640],[775,590],[800,500],[820,520],[840,480],[860,420],[880,500],[900,440],[915,560],[935,470],[945,610],[960,620],[975,550],[990,470],[1005,550],[1020,500],[1040,490],[1060,470],[1080,470],[1100,470],[1120,530],[1135,600],[1150,640],[1165,685],[1185,660],[1200,520],[1220,590],[1245,530],[1265,560],[1285,620],[1300,590],[1330,620],[1345,650],[1365,690],[1385,740]],
	outMax: [[466,766],[470,795],[485,808],[490,775],[560,775],[565,800],[600,775],[615,810],[660,780],[668,920],[685,890],[710,890],[740,800],[800,855],[840,890],[860,920],[880,975],[895,930],[910,875],[985,830],[1000,885],[1030,900],[1052,965],[1075,970],[1110,900],[1150,855],[1195,850],[1225,945],[1260,935],[1295,955],[1320,880],[1330,815],[1350,870],[1385,830]],
	outAvg: [[466,766],[610,772],[620,790],[660,790],[668,860],[700,860],[720,840],[740,805],[770,825],[800,845],[840,885],[860,920],[880,965],[895,925],[910,870],[940,880],[985,830],[1000,880],[1030,880],[1060,920],[1085,930],[1110,890],[1150,840],[1195,850],[1220,920],[1250,915],[1295,945],[1320,860],[1330,820],[1350,850],[1385,830]],
	legend: [
		[[31,"bps"],[94.500,"Now"],[164,"Ave"],[227,"Max"],[290,"95th %"]],
		[[45,"In"],[131,"65.97M",1],[197,"483.66M",1],[262,"2.25G",1],[326,"1.02G",1]],
		[[45,"Out"],[131,"135.78M",1],[197,"224.00M",1],[262,"683.35M",1],[326,"524.75M",1]],
		[[31,"Total"],[81,"42.19T"],[137,"(In"],[173,"28.84T"],[231,"Out"],[265,"13.36T)"]]
	]
});

// thumbnails: z zero line, r red lines, f flat start, a/b in max/avg, c/d out max/avg
var THUMBS = {
	left: [
		{z:47,r:[10,55],f:50,a:[[0,0],[2,22],[7,28],[15,10],[23,31],[29,12],[38,21],[47,38],[50,45],[52,47]],b:[[0,0],[2,22],[7,28],[15,10],[23,31],[29,12],[38,21],[47,38],[50,45],[52,47]],c:[[0,52],[20,56],[29,53],[43,60],[48,56],[52,49],[75,51],[112,48]],d:[[0,52],[20,56],[29,53],[43,60],[48,56],[52,49],[75,51],[112,48]]},
		{z:27,r:[19,40],a:[[0,24],[3,22],[11,22],[12,1],[14,22],[20,21],[25,18],[30,23],[60,23],[96,26],[112,27]],b:[[0,24],[3,23],[20,23],[25,20],[30,24],[60,24],[96,26],[112,27]],c:[[0,28],[4,30],[6,60],[8,30],[28,30],[31,50],[34,30],[112,28]],d:[[0,28],[4,30],[6,40],[8,30],[28,30],[31,40],[34,30],[112,28]]},
		{z:29,r:[13,37],a:[[0,29],[8,18],[14,8],[22,2],[30,5],[35,20],[45,27],[60,27],[61,5],[62,27],[70,22],[85,21],[110,26],[112,29]],b:[[0,29],[8,19],[14,10],[22,8],[30,10],[35,22],[45,27],[60,27],[70,24],[85,23],[110,27],[112,29]],c:[[0,32],[20,38],[26,47],[28,35],[58,35],[59,60],[60,35],[70,35],[71,52],[72,35],[112,30]],d:[[0,32],[20,34],[58,33],[59,45],[60,33],[70,33],[71,42],[72,33],[112,30]]},
		{z:29,r:[21],f:39,a:[[54,29],[56,21],[62,26],[72,26],[80,18],[84,5],[90,3],[92,22],[98,1],[102,20],[112,27]],b:[[54,29],[62,26],[82,18],[88,12],[95,22],[112,27]],c:[[54,30],[56,50],[60,60],[64,45],[70,50],[76,45],[80,55],[84,40],[88,30],[92,58],[96,30],[112,31]],d:[[54,30],[60,38],[70,38],[80,40],[90,32],[112,31]]},
		{z:29,r:[24],f:75,a:[[83,29],[84,15],[88,22],[95,20],[100,5],[103,20],[105,2],[108,18],[112,22]],b:[[83,29],[92,26],[100,22],[108,24],[112,28]],c:[[83,30],[87,50],[88,60],[92,45],[96,50],[100,38],[104,58],[106,60],[108,30],[112,30]],d:[[83,30],[90,38],[100,36],[112,30]]},
		{z:29,r:[26],f:96,a:[[99,29],[100,15],[104,10],[107,1],[110,12],[112,29]],b:[[99,29],[104,25],[110,26],[112,29]],c:[[99,30],[100,60],[104,46],[108,60],[112,60]],d:[[99,30],[104,40],[112,32]]},
		{z:29,r:[29],a:[[106,29],[107,5],[109,0],[112,8]],b:[[106,29],[109,22],[112,24]],c:[[106,30],[107,60],[112,60]],d:[[106,30],[109,36],[112,32]]},
		{z:30,r:[],a:[[110.500,30],[110.500,0],[111.500,0]],b:[[110.500,30],[111.500,30]],c:[[110.500,30],[110.500,60],[111.500,60]],d:[[110.500,30],[111.500,30]]},
		null
	],
	right: [
		{z:40,r:[9,57],a:[[0,12],[2,4],[6,16],[14,22],[22,10],[30,22],[42,22],[48,10],[56,26],[70,18],[80,22],[95,24],[112,26]],b:[[0,12],[2,6],[6,16],[14,22],[22,12],[30,24],[42,24],[48,14],[56,28],[70,20],[80,24],[95,26],[112,28]],c:[[0,52],[20,58],[50,58],[55,60],[80,54],[112,48]],d:[[0,52],[20,57],[50,57],[55,59],[80,53],[112,47]]},
		{z:38,r:[13,53],a:[[0,38],[3,18],[12,16],[25,10],[40,20],[70,18],[85,14],[100,24],[112,30]],b:[[0,38],[3,20],[12,18],[25,14],[40,22],[70,22],[85,18],[100,26],[112,30]],c:[[0,46],[20,50],[45,50],[60,54],[80,52],[112,44]],d:[[0,45],[20,48],[45,48],[60,52],[80,50],[112,43]]},
		{z:38,r:[13,53],a:[[0,38],[3,12],[12,20],[20,8],[28,24],[60,18],[72,10],[85,22],[100,24],[112,30]],b:[[0,38],[3,14],[12,22],[20,12],[28,26],[60,20],[72,14],[85,24],[100,26],[112,30]],c:[[0,46],[20,50],[45,50],[60,54],[80,52],[112,44]],d:[[0,45],[20,48],[45,48],[60,52],[80,50],[112,43]]},
		{z:46,r:[16],f:25,a:[[30,46],[32,38],[45,36],[62,34],[64,4],[72,12],[85,24],[100,20],[112,36]],b:[[30,46],[32,40],[45,40],[62,38],[64,16],[72,20],[85,28],[100,28],[112,38]],c:[[38,47],[62,48],[64,58],[85,56],[100,60],[112,52]],d:[[38,47],[62,48],[64,56],[85,54],[100,57],[112,50]]},
		{z:46,r:[20],f:62,a:[[70,46],[72,38],[85,36],[87,4],[92,12],[100,24],[112,36]],b:[[70,46],[72,42],[85,40],[87,18],[92,22],[100,30],[112,40]],c:[[80,47],[87,48],[88,58],[100,58],[112,52]],d:[[80,47],[87,48],[88,56],[100,56],[112,50]]},
		{z:46,r:[28],f:85,a:[[96,46],[98,30],[102,6],[106,20],[112,30]],b:[[96,46],[98,36],[102,20],[106,28],[112,36]],c:[[98,47],[102,58],[112,54]],d:[[98,47],[102,55],[112,52]]},
		{z:46,r:[37],a:[[106,46],[108,8],[112,18]],b:[[106,46],[108,24],[112,30]],c:[[106,47],[108,60],[112,58]],d:[[106,47],[108,56],[112,55]]},
		{z:46,r:[],a:[[110.500,46],[110.500,4],[111.500,4]],b:[[110.500,46],[111.500,46]],c:[[110.500,46],[110.500,58],[111.500,58]],d:[[110.500,46],[111.500,46]]},
		null
	]
};

document.querySelectorAll(".thumbs").forEach(function (box) {
	var set = THUMBS[box.dataset.set];
	box.querySelectorAll("svg").forEach(function (svg, i) {
		var t = set[i];
		svg.setAttribute("viewBox", "0 0 112 60");
		if (!t) return;
		area(svg, t.a, t.z, C.inMax, 1, .12, i * 7 + 3);
		area(svg, t.b, t.z, C.inAvg, 1, .08, i * 7 + 5);
		area(svg, t.c, t.z, C.outMax, 1, .12, i * 7 + 11);
		area(svg, t.d, t.z, C.outAvg, 1, .08, i * 7 + 13);
		if (t.f !== undefined) add(svg, "path", {d: "M" + t.f + " " + (t.z + .5) + "H112", stroke: C.outAvg, "shape-rendering": "crispEdges"});
		t.r.forEach(function (y) {
			add(svg, "path", {d: "M0 " + (Math.round(y) + .5) + "H112", stroke: C.red, "shape-rendering": "crispEdges"});
		});
	});
});
```
